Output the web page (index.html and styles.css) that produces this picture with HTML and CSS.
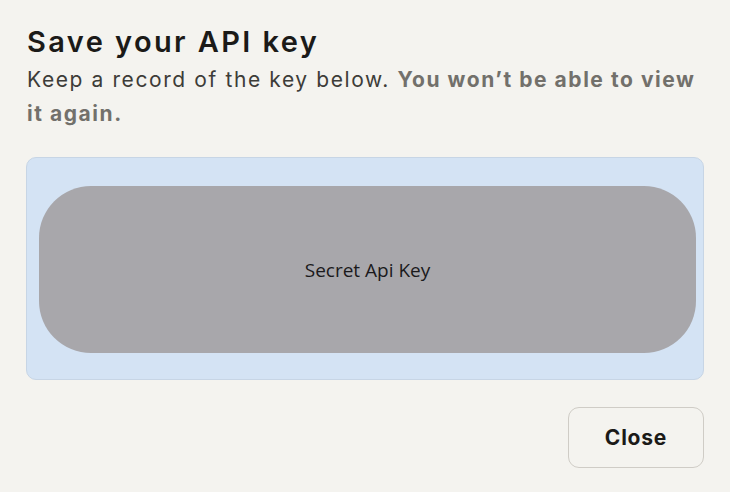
FILE: index.html
```html
<!DOCTYPE html>
<html lang="en">
<head>
<meta charset="utf-8">
<title>Save your API key</title>
<link rel="stylesheet" href="styles.css">
</head>
<body>
<div class="dialog">
  <h1 class="title">Save your API key</h1>
  <p class="desc">Keep a record of the key below. <strong>You won’t be able to view it again.</strong></p>
  <div class="key-box">
    <div class="key-pill">Secret Api Key</div>
  </div>
  <div class="actions">
    <button class="btn-close" type="button">Close</button>
  </div>
</div>
</body>
</html>
```
FILE: styles.css
```css
html, body {
  margin: 0;
  padding: 0;
  background: #f4f3ef;
}
.dialog {
  padding: 24px 26px 0 27px;
  font-family: Inter, "Liberation Sans", sans-serif;
}
.title {
  margin: 0;
  font-size: 29px;
  line-height: 36px;
  font-weight: 600;
  color: #1b1a18;
  letter-spacing: 2.4px;
}
.desc {
  margin: 3px 0 0 0;
  font-size: 21px;
  line-height: 34px;
  color: #3d3c38;
  font-weight: 400;
  letter-spacing: 1.6px;
}
.desc strong {
  font-weight: 700;
  color: #72706b;
  letter-spacing: 1.55px;
}
.key-box {
  margin-top: 26px;
  margin-left: -1px;
  background: #d4e3f4;
  border: 1px solid #c7d5e5;
  border-radius: 10px;
  padding: 28px 7px 0 12px;
  box-sizing: border-box;
  height: 223px;
}
.key-pill {
  height: 167px;
  background: #a8a7ab;
  border-radius: 52px;
  display: flex;
  align-items: center;
  justify-content: center;
  font-family: "Open Sans", sans-serif;
  font-size: 19px;
  color: #1b1a1c;
}
.actions {
  display: flex;
  justify-content: flex-end;
  margin-top: 27px;
}
.btn-close {
  width: 136px;
  height: 61px;
  border: 1px solid #cfccc6;
  border-radius: 11px;
  background: #f4f3ef;
  font-family: Inter, "Liberation Sans", sans-serif;
  font-size: 21px;
  font-weight: 700;
  letter-spacing: 0.8px;
  color: #1b1a18;
  cursor: pointer;
}
```
